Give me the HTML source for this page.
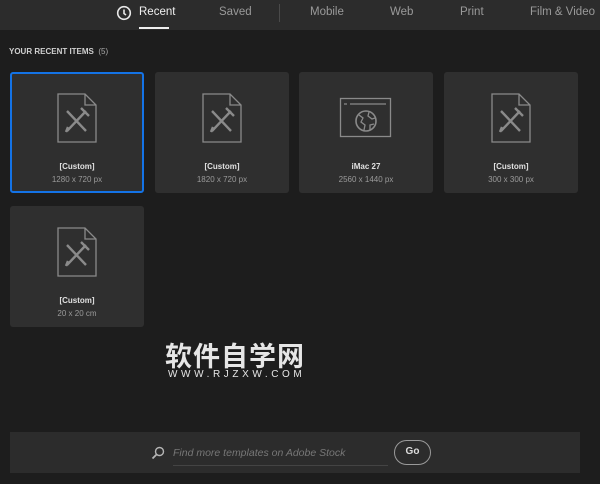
<!DOCTYPE html><html><head><style>
body{margin:0;width:600px;height:484px;background:#1d1d1d;font-family:"Liberation Sans",sans-serif;overflow:hidden;position:relative}
.hdr{position:absolute;left:0;top:0;width:600px;height:30px;background:#2c2c2c}
.t{position:absolute;top:6px;font-size:11.5px;color:#9a9a9a}
.card{position:absolute;width:134px;height:121px;background:#2f2f2f;border-radius:3px;box-sizing:border-box}
.card svg{position:absolute;left:45px;top:20px}
.n{position:absolute;left:0;width:100%;top:90px;text-align:center;font-size:8px;color:#e0e0e0;font-weight:bold}
.s{position:absolute;left:0;width:100%;top:103px;text-align:center;font-size:8px;color:#9a9a9a}
</style></head><body>
<div class="hdr">
<svg style="position:absolute;left:116px;top:5px" width="16" height="16" viewBox="0 0 16 16"><circle cx="8" cy="8" r="6.3" fill="none" stroke="#e8e8e8" stroke-width="1.6"/><path d="M8 4.5V8.5L10 10" fill="none" stroke="#e8e8e8" stroke-width="1.6"/></svg>
<div class="t" style="left:139px;color:#f0f0f0">Recent</div>
<div style="position:absolute;left:139px;top:27px;width:30px;height:2px;background:#eee"></div>
<div class="t" style="left:219px">Saved</div>
<div style="position:absolute;left:279px;top:4px;width:1px;height:18px;background:#4a4a4a"></div>
<div class="t" style="left:310px">Mobile</div>
<div class="t" style="left:390px">Web</div>
<div class="t" style="left:460px">Print</div>
<div class="t" style="left:530px">Film &amp; Video</div>
</div>
<div style="position:absolute;left:9px;top:47px;font-size:8px;color:#d0d0d0;font-weight:bold">YOUR RECENT ITEMS <span style="font-weight:normal;color:#aaa">&nbsp;(5)</span></div>

<div class="card" style="left:10px;top:72px;border:2px solid #1473e6">
<svg style="left:43px;top:18px" width="44" height="52" viewBox="0 0 44 52"><path d="M3 2H30L41 13V50H3Z M30 2V13H41" fill="none" stroke="#8a8a8a" stroke-width="1.3"/><path d="M12 19L31 39M31 19L12 39M11 40L13 35M26 16L34 24" fill="none" stroke="#8a8a8a" stroke-width="2.4"/></svg>
<div class="n" style="top:88px">[Custom]</div><div class="s" style="top:101px">1280 x 720 px</div></div>

<div class="card" style="left:155px;top:72px">
<svg width="44" height="52" viewBox="0 0 44 52"><path d="M3 2H30L41 13V50H3Z M30 2V13H41" fill="none" stroke="#8a8a8a" stroke-width="1.3"/><path d="M12 19L31 39M31 19L12 39M11 40L13 35M26 16L34 24" fill="none" stroke="#8a8a8a" stroke-width="2.4"/></svg>
<div class="n">[Custom]</div><div class="s">1820 x 720 px</div></div>

<div class="card" style="left:299px;top:72px">
<svg style="left:40px;top:25px" width="54" height="42" viewBox="0 0 54 42"><rect x="1.5" y="1.5" width="50" height="38" fill="none" stroke="#8a8a8a" stroke-width="1.3"/><path d="M5 7H8M11 7H47" stroke="#8a8a8a" stroke-width="1.2"/><circle cx="27" cy="24" r="10" fill="none" stroke="#8a8a8a" stroke-width="1.6"/><path d="M20 18L24 21L22 25L26 28L25 33M30 15L29 19L33 22L36 21M31 33L31 28L35 27" fill="none" stroke="#8a8a8a" stroke-width="1.3"/></svg>
<div class="n">iMac 27</div><div class="s">2560 x 1440 px</div></div>

<div class="card" style="left:444px;top:72px">
<svg width="44" height="52" viewBox="0 0 44 52"><path d="M3 2H30L41 13V50H3Z M30 2V13H41" fill="none" stroke="#8a8a8a" stroke-width="1.3"/><path d="M12 19L31 39M31 19L12 39M11 40L13 35M26 16L34 24" fill="none" stroke="#8a8a8a" stroke-width="2.4"/></svg>
<div class="n">[Custom]</div><div class="s">300 x 300 px</div></div>

<div class="card" style="left:10px;top:206px">
<svg width="44" height="52" viewBox="0 0 44 52"><path d="M3 2H30L41 13V50H3Z M30 2V13H41" fill="none" stroke="#8a8a8a" stroke-width="1.3"/><path d="M12 19L31 39M31 19L12 39M11 40L13 35M26 16L34 24" fill="none" stroke="#8a8a8a" stroke-width="2.4"/></svg>
<div class="n">[Custom]</div><div class="s">20 x 20 cm</div></div>

<div style="position:absolute;left:165px;top:340px;font-size:27px;font-weight:bold;color:#e6e6e6;font-family:'Noto Sans CJK SC',sans-serif;letter-spacing:1px;line-height:30px">软件自学网</div>
<div style="position:absolute;left:168px;top:369px;font-size:10px;color:#e6e6e6;letter-spacing:3.6px">WWW.RJZXW.COM</div>

<div style="position:absolute;left:10px;top:432px;width:570px;height:41px;background:#2c2c2c"></div>
<svg style="position:absolute;left:151px;top:446px" width="14" height="14" viewBox="0 0 14 14"><circle cx="8.5" cy="5.5" r="4" fill="none" stroke="#b5b5b5" stroke-width="1.4"/><path d="M5.5 8.5L1.5 12.5" stroke="#b5b5b5" stroke-width="1.8"/></svg>
<div style="position:absolute;left:173px;top:447px;font-size:10.5px;font-style:italic;color:#777">Find more templates on Adobe Stock</div>
<div style="position:absolute;left:173px;top:465px;width:215px;height:1px;background:#444"></div>
<div style="position:absolute;left:394px;top:440px;width:37px;height:25px;border:1.5px solid #9a9a9a;border-radius:13px;box-sizing:border-box;color:#ddd;font-size:10px;font-weight:bold;text-align:center;line-height:22px">Go</div>
</body></html>
